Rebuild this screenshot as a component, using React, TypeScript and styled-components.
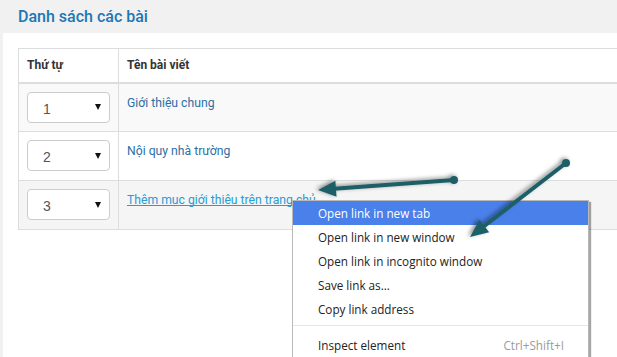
import styled, { createGlobalStyle } from "styled-components";

const GlobalStyle = createGlobalStyle`
  html, body {
    margin: 0;
    padding: 0;
    background: #f1f1f1;
    overflow: hidden;
  }
  body {
    font-family: Roboto, "Noto Sans", Arial, sans-serif;
  }
`;

const Page = styled.div`
  position: relative;
  width: 617px;
  height: 357px;
  overflow: hidden;
  background: #f1f1f1;
`;

const Header = styled.div`
  height: 33px;
  display: flex;
  align-items: center;
  padding-left: 18px;
`;

const Title = styled.h2`
  margin: 0;
  font-size: 16px;
  font-weight: 500;
  color: #1c77b5;
`;

const Panel = styled.div`
  margin-left: 3px;
  height: 324px;
  background: #fff;
  padding: 15px 0 0 15px;
  box-sizing: border-box;
`;

const Table = styled.table`
  width: 660px;
  border-collapse: collapse;
  font-size: 12px;
`;

const HeadCell = styled.th<{ $w?: number }>`
  width: ${(p) => (p.$w ? `${p.$w}px` : "auto")};
  height: 34px;
  padding: 0 8px;
  text-align: left;
  font-weight: 700;
  color: #333;
  border: 1px solid #ddd;
  border-bottom: 2px solid #ddd;
  box-sizing: border-box;
`;

const Row = styled.tr<{ $bg: string }>`
  background: ${(p) => p.$bg};
`;

const Cell = styled.td`
  height: 49px;
  padding: 8px;
  vertical-align: top;
  border: 1px solid #ddd;
  box-sizing: border-box;
`;

const Select = styled.div`
  width: 83px;
  height: 31px;
  box-sizing: border-box;
  border: 1px solid #ccc;
  border-radius: 4px;
  background: #fff;
  display: flex;
  align-items: center;
  justify-content: space-between;
  padding: 3px 8px 0 15px;
  font-family: "Liberation Sans", Arial, sans-serif;
  font-size: 14px;
  color: #555;
`;

const Caret = styled.span`
  width: 0;
  height: 0;
  border-left: 3px solid transparent;
  border-right: 3px solid transparent;
  border-top: 6px solid #111;
  margin-top: -3px;
`;

const Link = styled.a<{ $hover?: boolean }>`
  display: inline-block;
  margin-top: 3px;
  font-size: 12.2px;
  line-height: 16px;
  color: ${(p) => (p.$hover ? "#2a9bd3" : "#2d6fa6")};
  text-decoration: ${(p) => (p.$hover ? "underline" : "none")};
  text-decoration-skip-ink: none;
  cursor: pointer;
`;

const Menu = styled.ul`
  position: absolute;
  left: 292px;
  top: 200px;
  width: 295px;
  margin: 0;
  padding: 0 0 2px;
  list-style: none;
  background: #fff;
  border: 1px solid #b9b9b9;
  box-shadow: 2px 2px 1px rgba(0, 0, 0, 0.35);
  font-family: "Open Sans", "Noto Sans", sans-serif;
  font-size: 11.7px;
`;

const MenuItem = styled.li<{ $active?: boolean }>`
  height: 24px;
  display: flex;
  align-items: center;
  justify-content: space-between;
  padding: 0 24px 0 25px;
  color: ${(p) => (p.$active ? "#fff" : "#222")};
  background: ${(p) => (p.$active ? "#4a80ea" : "transparent")};
`;

const Shortcut = styled.span`
  color: #9a9a9a;
`;

const Separator = styled.li`
  height: 1px;
  margin: 4px 0 7px;
  background: #e6e6e6;
`;

const Overlay = styled.svg`
  position: absolute;
  left: 0;
  top: 0;
  pointer-events: none;
`;

const posts = [
  { n: 1, title: "Giới thiệu chung", bg: "#f9f9f9" },
  { n: 2, title: "Nội quy nhà trường", bg: "#fff" },
  { n: 3, title: "Thêm mục giới thiệu trên trang chủ", bg: "#f5f5f5", hover: true },
];

function Arrow({ from, to }: { from: [number, number]; to: [number, number] }) {
  const dx = to[0] - from[0];
  const dy = to[1] - from[1];
  const len = Math.hypot(dx, dy);
  const ux = dx / len;
  const uy = dy / len;
  const hl = 18;
  const hw = 8;
  const bx = to[0] - ux * hl;
  const by = to[1] - uy * hl;
  const px = -uy * hw;
  const py = ux * hw;
  return (
    <g>
      <line x1={from[0]} y1={from[1]} x2={bx + ux * 2} y2={by + uy * 2} stroke="#1e5f66" strokeWidth={4} />
      <polygon
        points={`${to[0]},${to[1]} ${bx + px},${by + py} ${bx - px},${by - py}`}
        fill="#1e5f66"
      />
      <circle cx={from[0]} cy={from[1]} r={4} fill="#1e5f66" />
    </g>
  );
}

export default function App() {
  return (
    <>
      <GlobalStyle />
      <Page>
        <Header>
          <Title>Danh sách các bài</Title>
        </Header>
        <Panel>
          <Table>
            <thead>
              <tr>
                <HeadCell $w={100}>Thứ tự</HeadCell>
                <HeadCell>Tên bài viết</HeadCell>
              </tr>
            </thead>
            <tbody>
              {posts.map((p) => (
                <Row key={p.n} $bg={p.bg}>
                  <Cell>
                    <Select>
                      {p.n}
                      <Caret />
                    </Select>
                  </Cell>
                  <Cell>
                    <Link $hover={p.hover}>{p.title}</Link>
                  </Cell>
                </Row>
              ))}
            </tbody>
          </Table>
        </Panel>

        <Menu>
          <MenuItem $active>Open link in new tab</MenuItem>
          <MenuItem>Open link in new window</MenuItem>
          <MenuItem>Open link in incognito window</MenuItem>
          <MenuItem>Save link as...</MenuItem>
          <MenuItem>Copy link address</MenuItem>
          <Separator />
          <MenuItem>
            Inspect element
            <Shortcut>Ctrl+Shift+I</Shortcut>
          </MenuItem>
        </Menu>

        <Overlay width={617} height={357}>
          <defs>
            <filter id="sh" x="-20%" y="-50%" width="140%" height="200%">
              <feDropShadow dx={-2} dy={-1} stdDeviation={2} floodColor="#000" floodOpacity={0.45} />
            </filter>
          </defs>
          <g filter="url(#sh)">
            <Arrow from={[454, 180]} to={[318, 190]} />
            <Arrow from={[566, 163]} to={[470, 237]} />
          </g>
        </Overlay>
      </Page>
    </>
  );
}
